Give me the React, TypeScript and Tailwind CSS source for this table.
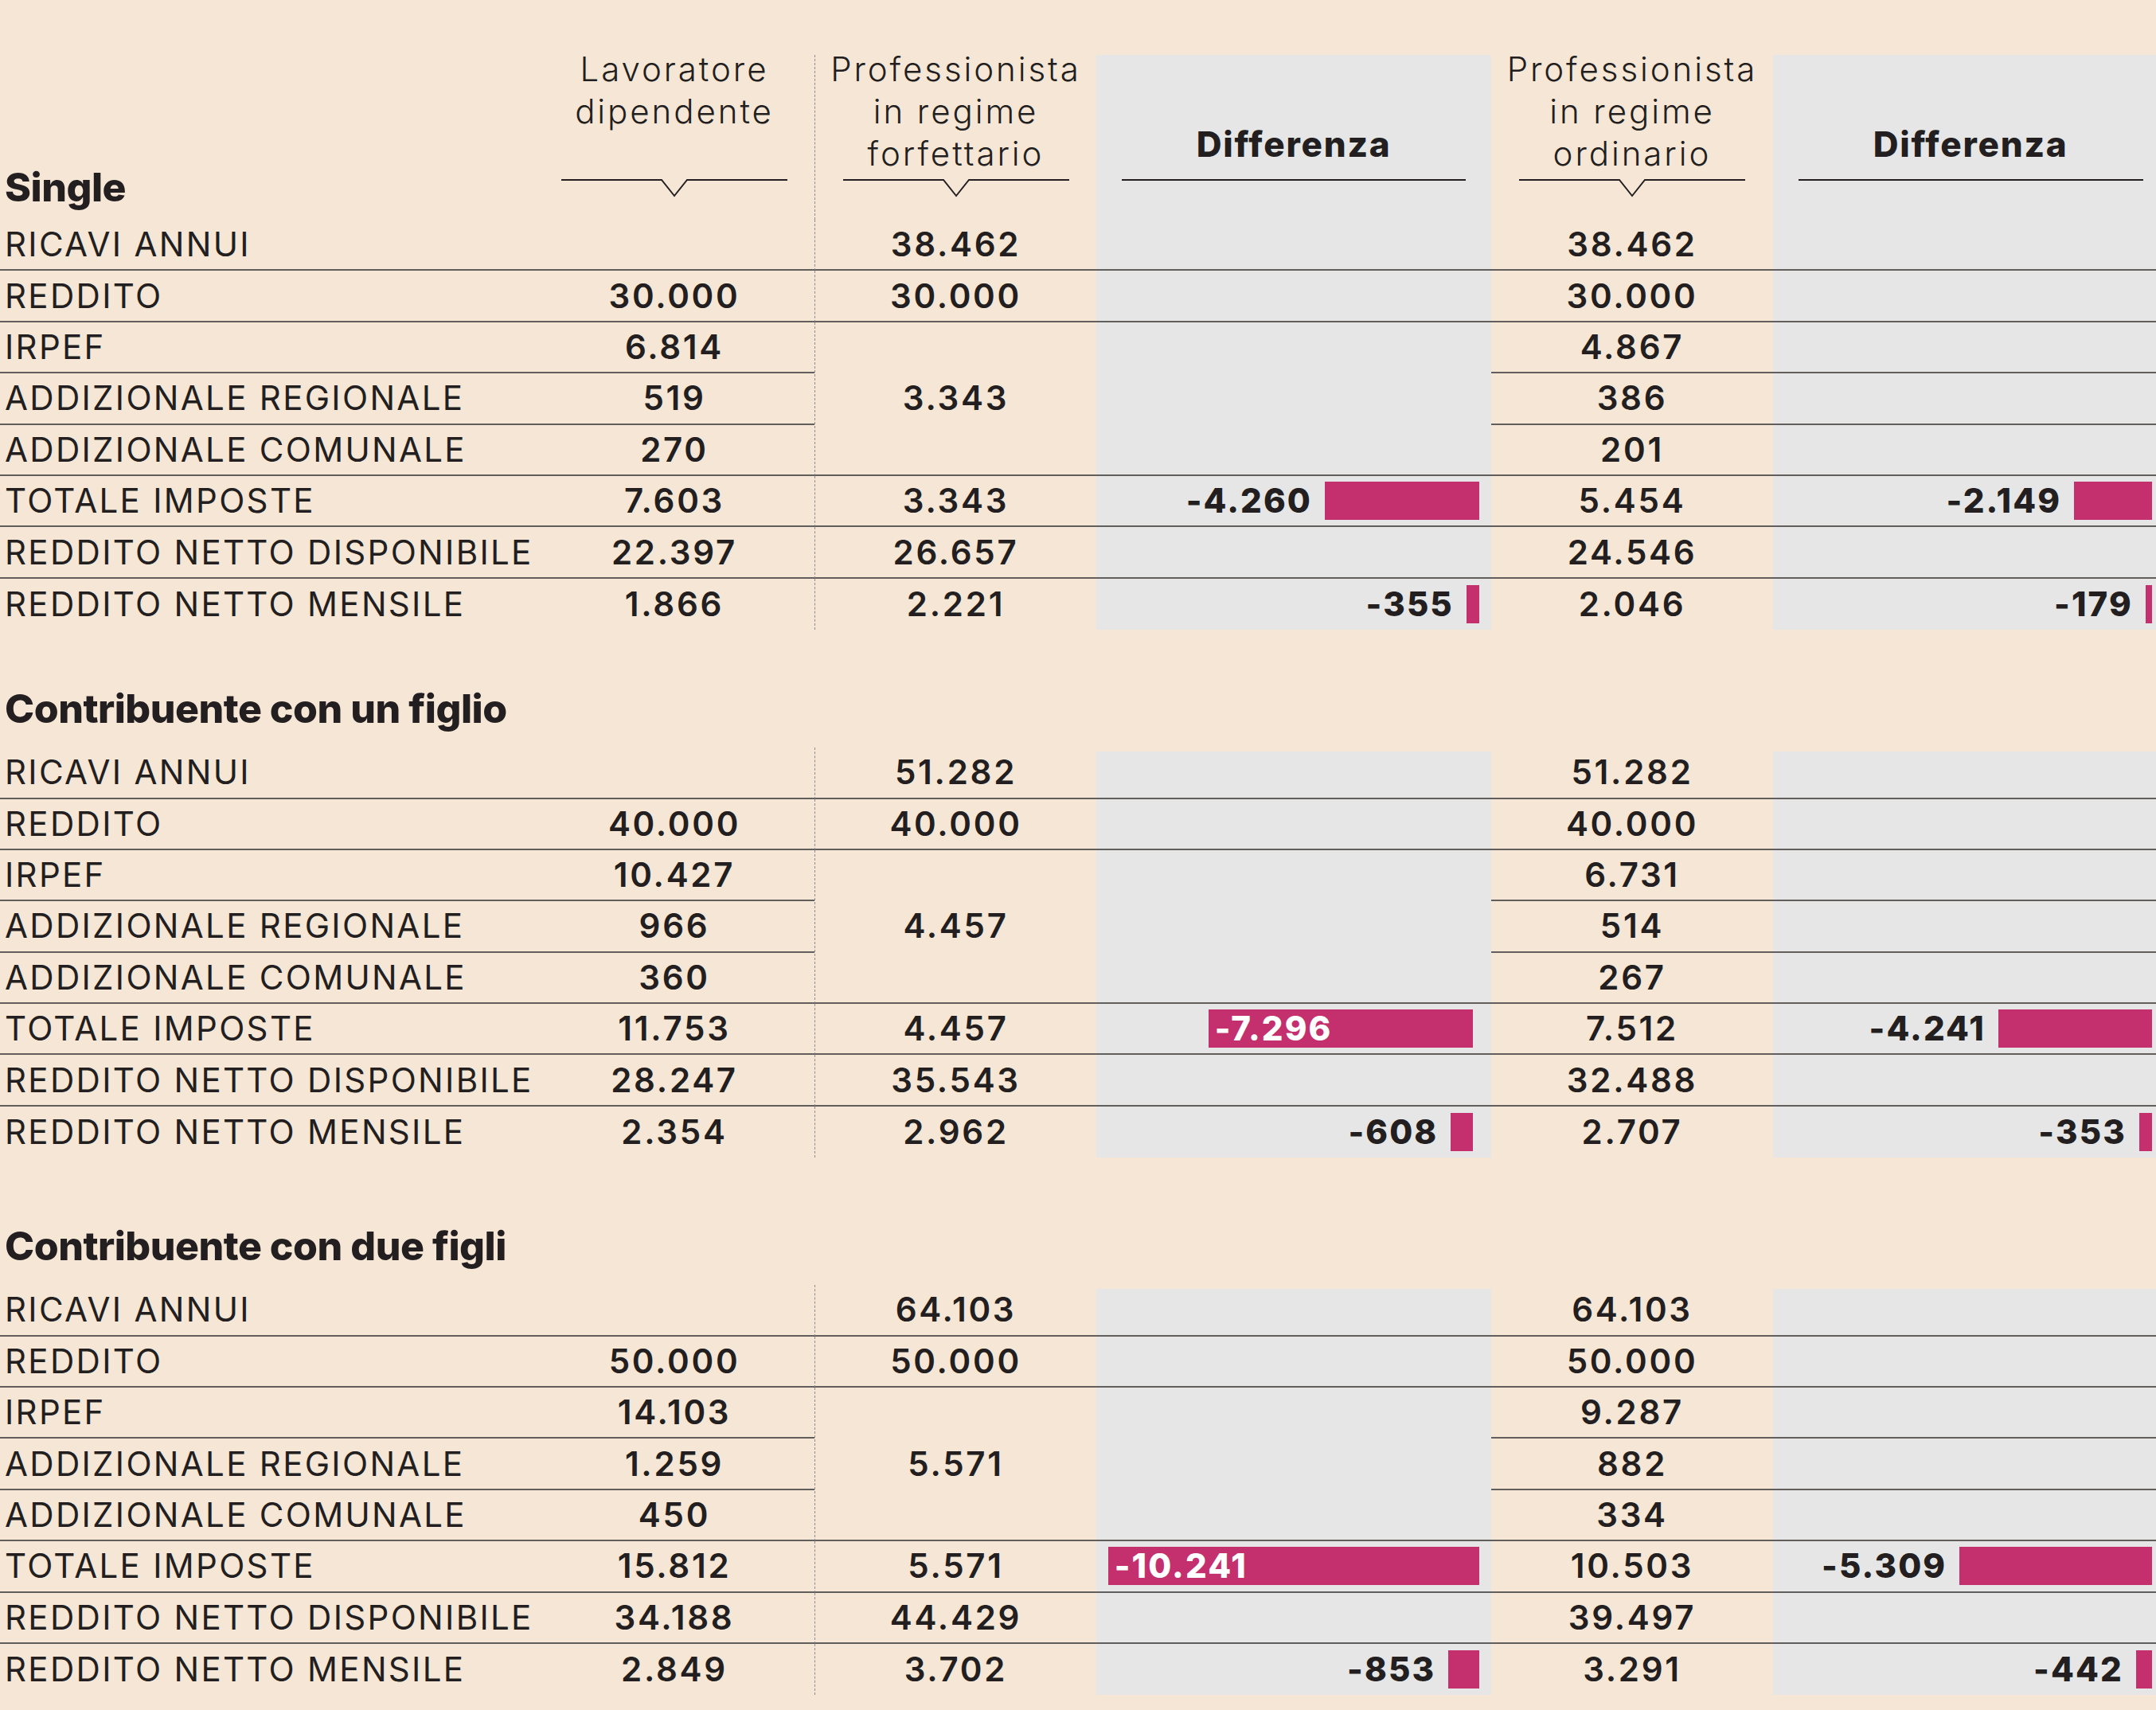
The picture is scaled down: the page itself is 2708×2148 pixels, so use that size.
import React from "react";

const K = 0.04554;
const LINE = "border-b-2 border-b-[#625e5b]";
const COLS = "grid grid-cols-[671px_352px_354px_496px_354px_481px]";

type Diff = { v: string; n: number; inside?: boolean };

type Section = {
  title: string;
  lav: string[];
  ord: string[];
  forf: { r0: string; r1: string; merged: string; r5: string; r6: string; r7: string };
  d1tot: Diff;
  d1m: Diff;
  d2tot: Diff;
  d2m: Diff;
  d1pr: string;
  titleMt: string;
};

const LABELS = [
  "RICAVI ANNUI",
  "REDDITO",
  "IRPEF",
  "ADDIZIONALE REGIONALE",
  "ADDIZIONALE COMUNALE",
  "TOTALE IMPOSTE",
  "REDDITO NETTO DISPONIBILE",
  "REDDITO NETTO MENSILE",
];

const SECTIONS: Section[] = [
  {
    title: "Single",
    lav: ["", "30.000", "6.814", "519", "270", "7.603", "22.397", "1.866"],
    ord: ["38.462", "30.000", "4.867", "386", "201", "5.454", "24.546", "2.046"],
    forf: { r0: "38.462", r1: "30.000", merged: "3.343", r5: "3.343", r6: "26.657", r7: "2.221" },
    d1tot: { v: "-4.260", n: 4260 },
    d1m: { v: "-355", n: 355 },
    d2tot: { v: "-2.149", n: 2149 },
    d2m: { v: "-179", n: 179 },
    d1pr: "pr-[15px]",
    titleMt: "",
  },
  {
    title: "Contribuente con un figlio",
    lav: ["", "40.000", "10.427", "966", "360", "11.753", "28.247", "2.354"],
    ord: ["51.282", "40.000", "6.731", "514", "267", "7.512", "32.488", "2.707"],
    forf: { r0: "51.282", r1: "40.000", merged: "4.457", r5: "4.457", r6: "35.543", r7: "2.962" },
    d1tot: { v: "-7.296", n: 7296, inside: true },
    d1m: { v: "-608", n: 608 },
    d2tot: { v: "-4.241", n: 4241 },
    d2m: { v: "-353", n: 353 },
    d1pr: "pr-[23px]",
    titleMt: "mt-[74px]",
  },
  {
    title: "Contribuente con due figli",
    lav: ["", "50.000", "14.103", "1.259", "450", "15.812", "34.188", "2.849"],
    ord: ["64.103", "50.000", "9.287", "882", "334", "10.503", "39.497", "3.291"],
    forf: { r0: "64.103", r1: "50.000", merged: "5.571", r5: "5.571", r6: "44.429", r7: "3.702" },
    d1tot: { v: "-10.241", n: 10241, inside: true },
    d1m: { v: "-853", n: 853 },
    d2tot: { v: "-5.309", n: 5309 },
    d2m: { v: "-442", n: 442 },
    d1pr: "pr-[15px]",
    titleMt: "mt-[86px]",
  },
];

const FONT = "font-['Inter','Liberation_Sans',sans-serif]";
const NUM = "text-[42px] leading-none font-semibold tracking-[0.065em] text-[#231f20]";
const DNUM = "text-[42px] leading-none font-extrabold tracking-[0.05em]";
const DASH = "border-l border-l-[#8c8c8c] [border-left-style:dashed]";
const GRAY = "bg-[#e6e6e6]";
const GRAY_TOP = "bg-[linear-gradient(to_bottom,transparent_5px,#e6e6e6_5px)]";

function DiffContent({ d }: { d: Diff }) {
  if (d.inside) {
    return (
      <div
        className={`h-[48px] bg-[#c42f6d] flex items-center pl-[8px] text-white ${DNUM}`}
        style={{ width: d.n * K }}
      >
        {d.v}
      </div>
    );
  }
  return (
    <div className="flex items-center gap-[16px]">
      <span className={`${DNUM} text-[#231f20]`}>{d.v}</span>
      <div className="h-[48px] bg-[#c42f6d]" style={{ width: d.n * K }} />
    </div>
  );
}

function Notch() {
  return (
    <svg width="284" height="24" viewBox="0 0 284 24" className="block mx-auto">
      <path d="M0 1 H126 L142 21 L158 1 H284" fill="none" stroke="#231f20" strokeWidth="2" />
    </svg>
  );
}

function Straight({ w, cls }: { w: number; cls: string }) {
  return (
    <svg width={w} height="24" viewBox={`0 0 ${w} 24`} className={`block ${cls}`}>
      <path d={`M0 1 H${w}`} fill="none" stroke="#231f20" strokeWidth="2" />
    </svg>
  );
}

function HeadText({ lines }: { lines: string[] }) {
  return (
    <div className="-mt-[9px] text-center text-[42px] leading-[53px] font-light tracking-[0.07em] text-[#231f20]">
      {lines.map((l) => (
        <div key={l}>{l}</div>
      ))}
    </div>
  );
}

function Header() {
  return (
    <div className={`${COLS} h-[207px]`}>
      <div className="flex flex-col justify-end pb-[16px] pl-[6px]">
        <div className="text-[50px] leading-none font-extrabold tracking-[-0.01em] text-[#231f20]">Single</div>
      </div>
      <div className="flex flex-col">
        <div className="flex-1">
          <HeadText lines={["Lavoratore", "dipendente"]} />
        </div>
        <Notch />
        <div className="h-[27px]" />
      </div>
      <div className={`flex flex-col ${DASH}`}>
        <div className="flex-1">
          <HeadText lines={["Professionista", "in regime", "forfettario"]} />
        </div>
        <Notch />
        <div className="h-[27px]" />
      </div>
      <div className={`flex flex-col ${GRAY}`}>
        <div className="flex-1 flex flex-col justify-end pb-[17px]">
          <div className="text-center text-[44px] leading-[53px] font-extrabold tracking-[0.04em] text-[#231f20]">
            Differenza
          </div>
        </div>
        <Straight w={432} cls="ml-[32px]" />
        <div className="h-[27px]" />
      </div>
      <div className="flex flex-col">
        <div className="flex-1">
          <HeadText lines={["Professionista", "in regime", "ordinario"]} />
        </div>
        <Notch />
        <div className="h-[27px]" />
      </div>
      <div className={`flex flex-col ${GRAY}`}>
        <div className="flex-1 flex flex-col justify-end pb-[17px] pl-[15px]">
          <div className="text-center text-[44px] leading-[53px] font-extrabold tracking-[0.04em] text-[#231f20]">
            Differenza
          </div>
        </div>
        <Straight w={433} cls="ml-[32px]" />
        <div className="h-[27px]" />
      </div>
    </div>
  );
}

function Table({ s, first }: { s: Section; first: boolean }) {
  const cells: React.ReactNode[] = [];
  const lab = (i: number, line: boolean) => (
    <div
      key={`l${i}`}
      className={`flex items-center pl-[6px] text-[42px] leading-none font-normal tracking-[0.055em] text-[#231f20] whitespace-nowrap ${line ? LINE : ""}`}
    >
      {LABELS[i]}
    </div>
  );
  const num = (k: string, v: string, line: boolean, extra = "") => (
    <div key={k} className={`flex items-center justify-center ${NUM} ${line ? LINE : ""} ${extra}`}>
      {v}
    </div>
  );
  const topGray = first ? GRAY : GRAY_TOP;

  for (let i = 0; i < 8; i++) {
    const line = i < 7;
    cells.push(lab(i, line));
    cells.push(num(`a${i}`, s.lav[i], line));
    if (i === 0) cells.push(num(`f${i}`, s.forf.r0, true, DASH));
    if (i === 1) cells.push(num(`f${i}`, s.forf.r1, true, DASH));
    if (i === 2)
      cells.push(
        <div key="fm" className={`row-span-3 flex items-center justify-center ${NUM} ${LINE} ${DASH}`}>
          {s.forf.merged}
        </div>
      );
    if (i === 5) cells.push(num(`f${i}`, s.forf.r5, true, DASH));
    if (i === 6) cells.push(num(`f${i}`, s.forf.r6, true, DASH));
    if (i === 7) cells.push(num(`f${i}`, s.forf.r7, false, DASH));
    // diff 1
    if (i === 2) cells.push(<div key="d1m" className={`row-span-3 ${GRAY} ${LINE}`} />);
    else if (i === 3 || i === 4) {
      /* covered by the merged cell */
    } else if (i === 5)
      cells.push(
        <div key="d1t" className={`flex items-center justify-end ${s.d1pr} ${GRAY} ${LINE}`}>
          <DiffContent d={s.d1tot} />
        </div>
      );
    else if (i === 7)
      cells.push(
        <div key="d1r" className={`flex items-center justify-end ${s.d1pr} ${GRAY}`}>
          <DiffContent d={s.d1m} />
        </div>
      );
    else cells.push(<div key={`d1${i}`} className={`${i === 0 ? topGray : GRAY} ${LINE}`} />);
    cells.push(num(`o${i}`, s.ord[i], line));
    if (i === 5)
      cells.push(
        <div key="d2t" className={`flex items-center justify-end pr-[5px] ${GRAY} ${LINE}`}>
          <DiffContent d={s.d2tot} />
        </div>
      );
    else if (i === 7)
      cells.push(
        <div key="d2r" className={`flex items-center justify-end pr-[5px] ${GRAY}`}>
          <DiffContent d={s.d2m} />
        </div>
      );
    else cells.push(<div key={`d2${i}`} className={`${i === 0 ? topGray : GRAY} ${line ? LINE : ""}`} />);
  }
  return <div className={`${COLS} grid-rows-[repeat(8,64.4px)]`}>{cells}</div>;
}

export default function App() {
  return (
    <div className={`w-[2708px] h-[2148px] overflow-hidden bg-[#f5e6d6] pt-[69px] ${FONT}`}>
      <Header />
      <Table s={SECTIONS[0]} first />
      {SECTIONS.slice(1).map((s) => (
        <div key={s.title}>
          <div
            className={`${s.titleMt} pl-[6px] text-[50px] leading-none font-extrabold tracking-[-0.01em] text-[#231f20]`}
          >
            {s.title}
          </div>
          <div className="h-[24px]" />
          <Table s={s} first={false} />
        </div>
      ))}
    </div>
  );
}
